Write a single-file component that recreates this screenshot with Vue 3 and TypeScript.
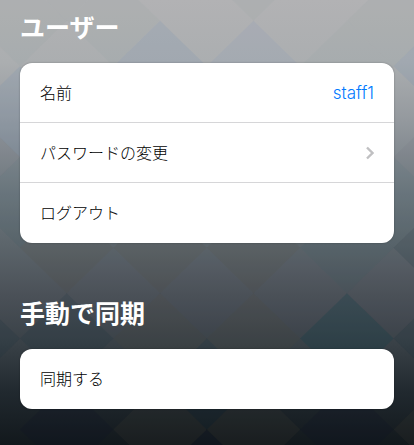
<script setup lang="ts">
interface Row {
  label: string
  value?: string
  action?: boolean
  chevron?: boolean
}

interface Section {
  id: string
  title: string
  rows: Row[]
}

const sections: Section[] = [
  {
    id: 'user',
    title: 'ユーザー',
    rows: [
      { label: '名前', value: 'staff1' },
      { label: 'パスワードの変更', action: true, chevron: true },
      { label: 'ログアウト', action: true },
    ],
  },
  {
    id: 'sync',
    title: '手動で同期',
    rows: [{ label: '同期する', action: true }],
  },
]

type Tint = 'sky' | 'lilac' | 'blue' | 'violet' | 'green' | 'brown' | 'teal' | 'deep' | 'navy'

// Backdrop diamonds: column and row of the top corner on the lattice, then the tint.
const diamonds: [number, number, Tint][] = [
  [1, 0, 'green'], [5, 0, 'green'], [8, 1, 'green'], [0, 1, 'green'],
  [2, 1, 'green'], [3, 2, 'sky'], [5, 2, 'lilac'], [7, 2, 'green'], [9, 2, 'sky'],
  [0, 3, 'sky'], [-1, 4, 'violet'], [9, 4, 'violet'], [0, 5, 'blue'], [8, 5, 'blue'],
  [1, 6, 'brown'], [3, 6, 'brown'], [5, 6, 'brown'], [7, 6, 'blue'], [9, 6, 'teal'],
  [2, 7, 'violet'], [4, 7, 'violet'], [6, 7, 'violet'], [8, 7, 'violet'],
  [-1, 8, 'teal'], [1, 8, 'teal'], [3, 8, 'brown'], [5, 8, 'brown'], [7, 8, 'deep'], [9, 8, 'teal'],
  [4, 9, 'teal'],
  [1, 10, 'navy'], [3, 10, 'brown'], [5, 10, 'brown'], [7, 10, 'navy'],
  [9, 10, 'brown'], [4, 11, 'navy'],
]

const halfWidth = 46.7
const halfHeight = 45.4

function corners(col: number, row: number): string {
  const x = 20 + halfWidth * col
  const y = halfHeight * row - 70
  return [
    [x, y],
    [x + halfWidth, y + halfHeight],
    [x, y + 2 * halfHeight],
    [x - halfWidth, y + halfHeight],
  ]
    .map((point) => point.join(','))
    .join(' ')
}
</script>

<template>
  <main class="page">
    <svg class="backdrop" viewBox="0 0 414 445" preserveAspectRatio="none" aria-hidden="true">
      <polygon
        v-for="[col, row, tint] in diamonds"
        :key="`${col}-${row}`"
        :points="corners(col, row)"
        :class="tint"
      />
    </svg>
    <section v-for="section in sections" :key="section.id" class="section" :aria-labelledby="section.id">
      <h2 :id="section.id" class="title">{{ section.title }}</h2>
      <div class="card">
        <component
          :is="row.action ? 'button' : 'div'"
          v-for="row in section.rows"
          :key="row.label"
          :type="row.action ? 'button' : undefined"
          class="row"
        >
          <span>{{ row.label }}</span>
          <span v-if="row.value" class="value">{{ row.value }}</span>
          <svg v-if="row.chevron" class="chevron" viewBox="0 0 8 14" aria-hidden="true">
            <path d="M1 1.5 6.5 7 1 12.5" />
          </svg>
        </component>
      </div>
    </section>
  </main>
</template>

<style>
body {
  margin: 0;
}
</style>

<style scoped>
.page {
  position: relative;
  box-sizing: border-box;
  min-height: 100vh;
  padding: 13px 20px 36px;
  display: flex;
  flex-direction: column;
  gap: 56px;
  overflow: hidden;
  font-family: Inter, "Noto Sans CJK JP", sans-serif;
  background: linear-gradient(
    #b2b2b4 0%,
    #abaeb0 14%,
    #94999e 27%,
    #707980 43%,
    #5c656b 55%,
    #4b5158 66%,
    #394147 77%,
    #21292f 88%,
    #12181c 100%
  );
}

.backdrop {
  position: absolute;
  inset: 0;
  width: 100%;
  height: 100%;
}

.sky {
  fill: rgb(115 145 175 / 18%);
}

.lilac {
  fill: rgb(130 145 185 / 15%);
}

.blue {
  fill: rgb(50 85 100 / 10%);
}

.violet {
  fill: rgb(85 80 100 / 6%);
}

.green {
  fill: rgb(150 165 165 / 14%);
}

.brown {
  fill: rgb(85 75 60 / 12%);
}

.teal {
  fill: rgb(20 50 60 / 15%);
}

.deep {
  fill: rgb(15 60 75 / 26%);
}

.navy {
  fill: rgb(12 20 35 / 22%);
}

.section {
  position: relative;
  display: flex;
  flex-direction: column;
  gap: 20px;
}

.title {
  margin: 0;
  font-size: 25px;
  line-height: 30px;
  font-weight: 700;
  color: #fff;
}

.card {
  overflow: hidden;
  border-radius: 12px;
  background: #fff;
  box-shadow: 0 0 2px rgb(0 0 0 / 30%);
}

.row {
  box-sizing: border-box;
  width: 100%;
  height: 60px;
  margin: 0;
  padding: 0 20px;
  display: flex;
  align-items: center;
  justify-content: space-between;
  border: 0;
  border-bottom: 1px solid #d6d6d8;
  background: none;
  color: #000;
  font-family: inherit;
  font-size: 16px;
  line-height: 24px;
  font-weight: 300;
  text-align: left;
}

.row:last-child {
  border-bottom: 0;
}

.value {
  font-size: 17px;
  color: #007aff;
}

.chevron {
  width: 8px;
  height: 14px;
  fill: none;
  stroke: #c0c0c2;
  stroke-width: 2.4;
}
</style>
